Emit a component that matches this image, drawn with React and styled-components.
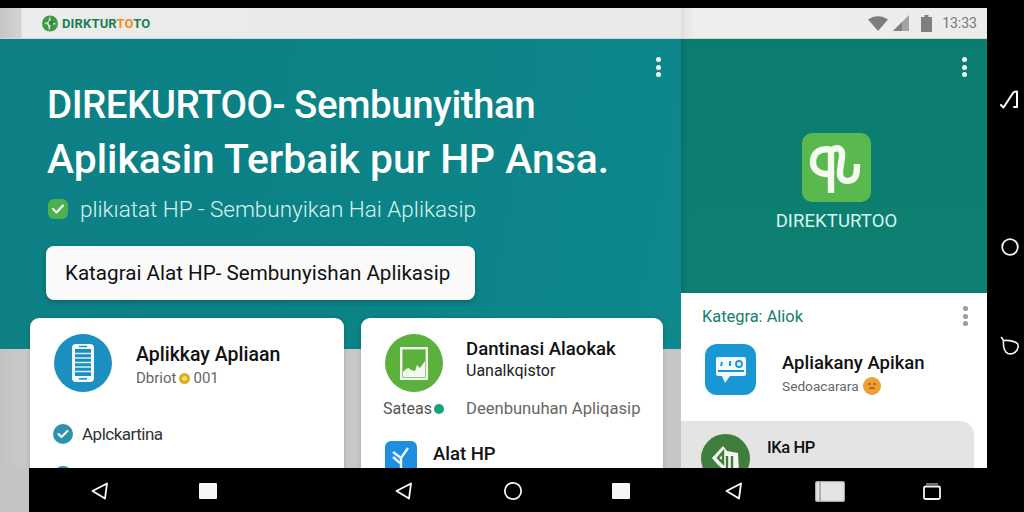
import React from "react";
import styled, { createGlobalStyle } from "styled-components";

const GlobalStyle = createGlobalStyle`
  html, body {
    margin: 0;
    padding: 0;
    background: #000;
  }
  * {
    box-sizing: border-box;
  }
`;

const Page = styled.div`
  width: 1024px;
  height: 512px;
  overflow: hidden;
  background: #000;
  font-family: Roboto, "Noto Sans", sans-serif;
  display: grid;
  grid-template-columns: 29px 958px 37px;
  grid-template-rows: 8px 460px 44px;
`;

const Screen = styled.div`
  grid-column: 1 / 3;
  grid-row: 2;
  display: flex;
  overflow: hidden;
`;

const LeftColumn = styled.div`
  width: 681px;
  display: flex;
  flex-direction: column;
  background: linear-gradient(90deg, #c2c2c4 0, #c8c8ca 20px, #c6c6c6 100%);
`;

const RightColumn = styled.div`
  width: 306px;
  display: flex;
  flex-direction: column;
  background: #fff;
`;

const TopBar = styled.div`
  height: 31px;
  flex: none;
  display: flex;
  align-items: center;
  border-bottom: 1px solid #cfd6d5;
  background: linear-gradient(90deg, #c6c6c8 0, #d4d4d6 21px, #ececec 22px, #e9e9e9 100%);
  padding-left: 42px;
  gap: 4px;
`;

const StatusBar = styled(TopBar)`
  background: linear-gradient(90deg, #dedede 0, #eeeeee 12px, #ececec 100%);
  padding: 0 10px 0 0;
  gap: 0;
  justify-content: flex-end;
`;

const BrandText = styled.span`
  font-size: 13px;
  font-weight: 700;
  color: #1a7f52;
  letter-spacing: 0.15px;
`;

const BrandAccent = styled.span`
  color: #ee8f22;
`;

const Clock = styled.span`
  font-size: 14px;
  color: #777;
  margin-left: 10px;
`;

const StatusIcon = styled.svg`
  flex: none;
  margin-left: ${(p) => p.$gap || 0}px;
`;

const Hero = styled.section`
  height: 310px;
  flex: none;
  background: linear-gradient(100deg, #0d8084 0%, #0b8387 60%, #0e878d 100%);
  padding: 18px 0 0 47px;
  display: flex;
  flex-direction: column;
  color: #fff;
`;

const DotsRow = styled.div`
  display: flex;
  justify-content: flex-end;
  padding-right: 19px;
  height: 20px;
`;

const Dots = styled.div`
  display: flex;
  flex-direction: column;
  justify-content: space-between;
  width: 6px;
  height: 20px;
`;

const Dot = styled.i`
  width: 5px;
  height: 5px;
  border-radius: 50%;
  background: ${(p) => p.$color || "#f2fbfa"};
`;

const Heading = styled.h1`
  margin: 0;
  font-weight: 500;
  white-space: nowrap;
`;

const HeadingLine = styled.span`
  display: block;
  height: 55px;
  line-height: 55px;
  font-size: ${(p) => p.$size}px;
  letter-spacing: ${(p) => p.$tracking || 0}px;
`;

const SubLine = styled.div`
  margin-top: 7px;
  height: 30px;
  display: flex;
  align-items: center;
  gap: 12px;
  padding-left: 1px;
  font-size: 22.5px;
  font-weight: 300;
  color: #d8f3f0;
  white-space: nowrap;
`;

const CheckBox = styled.span`
  width: 20px;
  height: 20px;
  border-radius: 6px;
  background: #4caf50;
  display: flex;
  align-items: center;
  justify-content: center;
`;

const KategoriButton = styled.button`
  margin: 22px 0 0 -1px;
  width: 429px;
  height: 54px;
  border: none;
  border-radius: 8px;
  background: #fafafa;
  box-shadow: 0 2px 5px rgba(0, 40, 40, 0.3);
  padding: 0 0 0 19px;
  text-align: left;
  font-family: inherit;
  font-size: 20.6px;
  color: #111;
  white-space: nowrap;
`;

const CardsRow = styled.div`
  margin-top: -31px;
  flex: 1;
  display: flex;
  gap: 17px;
  padding-left: 30px;
  min-height: 0;
`;

const Card = styled.article`
  width: ${(p) => p.$width}px;
  height: 170px;
  background: #fff;
  border-radius: 9px 9px 0 0;
  box-shadow: 0 1px 4px rgba(0, 0, 0, 0.18);
  padding: 16px 0 0 24px;
  overflow: hidden;
`;

const CardHead = styled.div`
  display: flex;
  align-items: ${(p) => p.$align || "center"};
  gap: ${(p) => p.$gap || 24}px;
`;

const Disc = styled.div`
  width: ${(p) => p.$size || 58}px;
  height: ${(p) => p.$size || 58}px;
  flex: none;
  border-radius: 50%;
  background: ${(p) => p.$color};
  display: flex;
  align-items: center;
  justify-content: center;
`;

const HeadText = styled.div`
  padding-top: ${(p) => p.$top || 0}px;
`;

const CardTitle = styled.div`
  font-size: ${(p) => p.$size || 18.5}px;
  font-weight: 500;
  color: #111;
  white-space: nowrap;
`;

const CardMeta = styled.div`
  margin-top: 3px;
  display: flex;
  align-items: center;
  gap: 3px;
  font-size: 15px;
  color: #666;
  white-space: nowrap;
`;

const Coin = styled.span`
  width: 11px;
  height: 11px;
  border-radius: 50%;
  background: #e0b425;
  border: 3px solid #dcae1e;
  box-shadow: inset 0 0 0 2px #f3df8d;
`;

const CheckRow = styled.div`
  margin: 32px 0 0 -1px;
  display: flex;
  align-items: center;
  gap: 9px;
  font-size: 17px;
  letter-spacing: -0.5px;
  color: #333;
`;

const CheckDisc = styled.span`
  width: 20px;
  height: 20px;
  flex: none;
  border-radius: 50%;
  background: #2b93ae;
  display: flex;
  align-items: center;
  justify-content: center;
`;

const PeekDisc = styled(CheckDisc)`
  margin: 22px 0 0 -1px;
  display: block;
`;

const SmallLine = styled.div`
  font-size: 16px;
  color: #222;
  margin-top: 1px;
  white-space: nowrap;
`;

const TitleStack = styled.div`
  margin-top: 4px;
`;

const MetaRow = styled.div`
  margin: 7px 0 0 -2px;
  display: flex;
  align-items: center;
  font-size: 16px;
  color: #555;
  white-space: nowrap;
`;

const MetaLabel = styled.span`
  width: 51px;
`;

const GreenDot = styled.span`
  width: 10px;
  height: 10px;
  border-radius: 50%;
  background: #14a37f;
`;

const MetaRest = styled.span`
  margin-left: 22px;
  font-size: 16.6px;
  color: #666;
`;

const ToolRow = styled.div`
  margin-top: 23px;
  display: flex;
  align-items: flex-start;
  gap: 16px;
`;

const ToolTile = styled.div`
  width: 32px;
  height: 32px;
  flex: none;
  border-radius: 6px;
  background: #1e8fe0;
  display: flex;
  align-items: center;
  justify-content: center;
`;

const ToolName = styled.div`
  font-size: 18.5px;
  font-weight: 500;
  color: #111;
  margin-top: 2px;
`;

const AppPanel = styled.section`
  height: 254px;
  flex: none;
  background: linear-gradient(180deg, #0b7d70 0%, #0d8072 100%);
  box-shadow: inset 6px 0 6px -5px rgba(0, 60, 70, 0.35);
  padding: 18px 0 0 0;
  display: flex;
  flex-direction: column;
`;

const AppLogoBlock = styled.div`
  margin-top: 56px;
  padding-left: 5px;
  display: flex;
  flex-direction: column;
  align-items: center;
`;

const AppTile = styled.div`
  width: 69px;
  height: 69px;
  border-radius: 10px;
  background: #59b84e;
`;

const AppName = styled.div`
  margin-top: 8px;
  font-size: 18.5px;
  color: #d8f6ee;
  letter-spacing: 0.1px;
`;

const ListPanel = styled.section`
  flex: 1;
  padding: 13px 0 0 0;
  display: flex;
  flex-direction: column;
  overflow: hidden;
`;

const ListHeader = styled.div`
  display: flex;
  align-items: center;
  justify-content: space-between;
  padding: 0 18px 0 21px;
  height: 22px;
  font-size: 16.4px;
  color: #12806b;
`;

const ListItem = styled.div`
  margin: 18px 0 0 24px;
  display: flex;
  align-items: center;
  gap: 26px;
`;

const BlueTile = styled.div`
  width: 51px;
  height: 51px;
  flex: none;
  border-radius: 12px;
  background: #1998d5;
  display: flex;
  align-items: center;
  justify-content: center;
`;

const SmallMeta = styled.div`
  margin-top: 3px;
  display: flex;
  align-items: center;
  gap: 4px;
  font-size: 13.7px;
  color: #666;
  white-space: nowrap;
`;

const Emoji = styled.span`
  width: 18px;
  height: 18px;
  border-radius: 50%;
  background: #eea032;
  display: flex;
  align-items: center;
  justify-content: center;
`;

const GreyRow = styled.div`
  margin: 26px 13px 0 0;
  flex: 1;
  background: #e4e4e4;
  border-radius: 0 14px 0 0;
  padding: 13px 0 0 20px;
  display: flex;
  gap: 17px;
`;

const GreyRowTitle = styled.div`
  margin-top: 4px;
  font-size: 16.5px;
  font-weight: 500;
  letter-spacing: -0.4px;
  color: #111;
`;

const SideRail = styled.aside`
  grid-column: 3;
  grid-row: 2;
  display: flex;
  flex-direction: column;
  align-items: center;
  padding: 81px 0 0 8px;
`;

const RailIcon = styled.svg`
  margin-top: ${(p) => p.$gap || 0}px;
  flex: none;
`;

const LeftGutter = styled.div`
  grid-column: 1;
  grid-row: 3;
  background: #c4c4c6;
`;

const NavBar = styled.nav`
  grid-column: 2 / 4;
  grid-row: 3;
  display: flex;
  align-items: center;
  padding: 2px 0 0 62px;
`;

const NavIcon = styled.svg`
  flex: none;
  margin-left: ${(p) => p.$gap || 0}px;
`;

function ThreeDots({ color }) {
  return (
    <Dots>
      <Dot $color={color} />
      <Dot $color={color} />
      <Dot $color={color} />
    </Dots>
  );
}

function Triangle({ gap }) {
  return (
    <NavIcon $gap={gap} width="18" height="18" viewBox="0 0 18 18" fill="none">
      <path d="M16 1.5 L1.5 9 L14 16.5 Z" stroke="#fff" strokeWidth="1.8" strokeLinejoin="round" />
    </NavIcon>
  );
}

function Square({ gap }) {
  return (
    <NavIcon $gap={gap} width="18" height="16" viewBox="0 0 18 16">
      <rect width="18" height="16" rx="1" fill="#f5f5f5" />
    </NavIcon>
  );
}

export default function App() {
  return (
    <Page>
      <GlobalStyle />
      <Screen>
        <LeftColumn>
          <TopBar>
            <svg width="16" height="17" viewBox="0 0 16 17">
              <circle cx="8" cy="8.5" r="8" fill="#3f9a45" />
              <path d="M2 8 L6 7 L8 1 L9 7 L15 9 L9 10 L7 16 L6 10 Z" fill="#eef5ea" opacity="0.85" />
              <circle cx="9" cy="8" r="2.4" fill="#2f8a3d" />
            </svg>
            <BrandText>
              DIRKTUR<BrandAccent>TO</BrandAccent>TO
            </BrandText>
          </TopBar>
          <Hero>
            <DotsRow>
              <ThreeDots />
            </DotsRow>
            <Heading>
              <HeadingLine $size={38.5} $tracking={-0.5}>DIREKURTOO- Sembunyithan</HeadingLine>
              <HeadingLine $size={40.8}>Aplikasin Terbaik pur HP Ansa.</HeadingLine>
            </Heading>
            <SubLine>
              <CheckBox>
                <svg width="14" height="12" viewBox="0 0 14 12" fill="none">
                  <path d="M2 6 L5.5 9.5 L12 2.5" stroke="#fff" strokeWidth="2" strokeLinecap="round" strokeLinejoin="round" />
                </svg>
              </CheckBox>
              plikıatat HP - Sembunyikan Hai Aplikasip
            </SubLine>
            <KategoriButton>Katagrai Alat HP- Sembunyishan Aplikasip</KategoriButton>
          </Hero>
          <CardsRow>
            <Card $width={314}>
              <CardHead>
                <Disc $color="#1b8fc0">
                  <svg width="22" height="38" viewBox="0 0 22 38">
                    <rect width="22" height="38" rx="4" fill="#f4fbfe" />
                    <rect x="3" y="5" width="16" height="27" fill="#1b8fc0" />
                    <path d="M3 9.5h16M3 14h16M3 18.5h16M3 23h16M3 27.5h16" stroke="#d7f0fa" strokeWidth="1.6" />
                    <rect x="7" y="1.8" width="8" height="1.4" fill="#1b8fc0" />
                    <rect x="7" y="34" width="8" height="1.6" fill="#1b8fc0" />
                  </svg>
                </Disc>
                <HeadText $top={4}>
                  <CardTitle $size={19.5}>Aplikkay Apliaan</CardTitle>
                  <CardMeta>
                    Dbriot <Coin /> 001
                  </CardMeta>
                </HeadText>
              </CardHead>
              <CheckRow>
                <CheckDisc>
                  <svg width="12" height="10" viewBox="0 0 12 10" fill="none">
                    <path d="M1.5 5 L4.5 8 L10.5 2" stroke="#fff" strokeWidth="2" strokeLinecap="round" strokeLinejoin="round" />
                  </svg>
                </CheckDisc>
                Aplckartina
              </CheckRow>
              <PeekDisc />
            </Card>
            <Card $width={302}>
              <CardHead $align="flex-start" $gap={23}>
                <Disc $color="#5cb03c">
                  <svg width="28" height="33" viewBox="0 0 28 33" fill="none">
                    <rect x="1.2" y="1.2" width="25.6" height="30.6" stroke="#f2f8ec" strokeWidth="2.4" />
                    <path d="M3 30 V25 C6 21 9 20 11 23 L15 24 L17 18 L20 21 L25 14 V30 Z" fill="#f2f8ec" />
                  </svg>
                </Disc>
                <TitleStack>
                  <CardTitle $size={18.6}>Dantinasi Alaokak</CardTitle>
                  <SmallLine>Uanalkqistor</SmallLine>
                </TitleStack>
              </CardHead>
              <MetaRow>
                <MetaLabel>Sateas</MetaLabel>
                <GreenDot />
                <MetaRest>Deenbunuhan Apliqasip</MetaRest>
              </MetaRow>
              <ToolRow>
                <ToolTile>
                  <svg width="20" height="26" viewBox="0 0 20 26" fill="none">
                    <path d="M2 8 L10 14 L17 4 M10 14 V26 M2 13 L9 19" stroke="#eaf6ff" strokeWidth="2.4" strokeLinejoin="round" />
                  </svg>
                </ToolTile>
                <ToolName>Alat HP</ToolName>
              </ToolRow>
            </Card>
          </CardsRow>
        </LeftColumn>
        <RightColumn>
          <StatusBar>
            <StatusIcon width="20" height="15" viewBox="0 0 20 15">
              <path d="M0 3.5 C6 -1 14 -1 20 3.5 L10 15 Z" fill="#7d7d7d" />
            </StatusIcon>
            <StatusIcon $gap={5} width="16" height="16" viewBox="0 0 16 16">
              <path d="M16 0 V16 H0 Z" fill="#a4a4a4" />
              <path d="M9 7 V16 H0 Z" fill="#808080" />
            </StatusIcon>
            <StatusIcon $gap={12} width="11" height="17" viewBox="0 0 11 17">
              <path d="M3.5 0 H7.5 V2 H11 V17 H0 V2 H3.5 Z" fill="#7f7f7f" />
            </StatusIcon>
            <Clock>13:33</Clock>
          </StatusBar>
          <AppPanel>
            <DotsRow>
              <ThreeDots />
            </DotsRow>
            <AppLogoBlock>
              <AppTile>
                <svg width="69" height="69" viewBox="0 0 69 69" fill="none">
                  <path
                    d="M29 60 V16 M30 17 C18 14 11 20 11 29 C11 37 17 41 26 41 M30 17 C36 13 41 16 40 24 L38 38 C37 46 42 49 48 47.5 C54 46 55 42 55 31"
                    stroke="#f6fbf2"
                    strokeWidth="6.4"
                  />
                </svg>
              </AppTile>
              <AppName>DIREKTURTOO</AppName>
            </AppLogoBlock>
          </AppPanel>
          <ListPanel>
            <ListHeader>
              Kategra: Aliok
              <ThreeDots color="#9a9a9a" />
            </ListHeader>
            <ListItem>
              <BlueTile>
                <svg width="32" height="30" viewBox="0 0 32 30">
                  <path d="M3 2 H29 Q31 2 31 4 V19 Q31 21 29 21 H15 L10 28 L7 21 H3 Q1 21 1 19 V4 Q1 2 3 2 Z" fill="#f2fafe" />
                  <path d="M3 16 H29" stroke="#1998d5" strokeWidth="2" />
                  <circle cx="24" cy="9" r="3" fill="none" stroke="#1998d5" strokeWidth="1.8" />
                  <path d="M15 6 V11 M7 7 L6 11" stroke="#1998d5" strokeWidth="2" />
                </svg>
              </BlueTile>
              <HeadText $top={7}>
                <CardTitle>Apliakany Apikan</CardTitle>
                <SmallMeta>
                  Sedoacarara
                  <Emoji>
                    <svg width="12" height="12" viewBox="0 0 12 12">
                      <circle cx="3.5" cy="4" r="1.2" fill="#a8541a" />
                      <circle cx="8.5" cy="4" r="1.2" fill="#a8541a" />
                      <path d="M3.5 9 Q6 6.5 8.5 9" stroke="#a8541a" strokeWidth="1.2" fill="none" />
                    </svg>
                  </Emoji>
                </SmallMeta>
              </HeadText>
            </ListItem>
            <GreyRow>
              <Disc $size={49} $color="#3e7f3e">
                <svg width="32" height="32" viewBox="0 0 32 32" fill="none">
                  <path d="M2 15 L13 3 L17 8 L28 10 L29 30 H18 L8 22 Z" fill="#f4f8f0" />
                  <path d="M13 9 L8 15 L13 20 Z M17 13 V27 M22 13 V27" stroke="#3e7f3e" strokeWidth="2.4" />
                </svg>
              </Disc>
              <GreyRowTitle>IKa HP</GreyRowTitle>
            </GreyRow>
          </ListPanel>
        </RightColumn>
      </Screen>
      <SideRail>
        <RailIcon width="20" height="20" viewBox="0 0 20 20" fill="none">
          <path d="M1 16 L3.5 18.5 L13 4 Q14 2.5 16 2.5 H17 V18 H14" stroke="#fff" strokeWidth="2" strokeLinejoin="round" strokeLinecap="round" />
        </RailIcon>
        <RailIcon $gap={128} width="20" height="20" viewBox="0 0 20 20" fill="none">
          <circle cx="10" cy="10" r="7.8" stroke="#f4f4f4" strokeWidth="1.8" />
        </RailIcon>
        <RailIcon $gap={79} width="20" height="20" viewBox="0 0 20 20" fill="none">
          <path d="M1.5 1.5 L3.5 4.5 C8 4 13 5 16 6.5 C19 8 18.5 11 17 14 C15 17.5 11 18.5 8 17.5 C4 16 3 12 3.5 4.5" stroke="#f4f4f4" strokeWidth="1.6" strokeLinecap="round" strokeLinejoin="round" />
        </RailIcon>
      </SideRail>
      <LeftGutter />
      <NavBar>
        <Triangle />
        <Square gap={90} />
        <Triangle gap={178} />
        <NavIcon $gap={90} width="20" height="20" viewBox="0 0 20 20" fill="none">
          <circle cx="10" cy="10" r="8.2" stroke="#f4f4f4" strokeWidth="1.8" />
        </NavIcon>
        <Square gap={89} />
        <Triangle gap={95} />
        <NavIcon $gap={72} width="30" height="21" viewBox="0 0 30 21">
          <rect x="0.6" y="0.6" width="28.8" height="19.8" rx="1.5" fill="#e4e4e4" stroke="#aaa" strokeWidth="1.2" />
          <path d="M5 1 V20" stroke="#8e8e8e" strokeWidth="1.2" />
        </NavIcon>
        <NavIcon $gap={78} width="18" height="17" viewBox="0 0 18 17" fill="none">
          <rect x="1" y="3.5" width="16" height="12.5" rx="1.5" stroke="#f4f4f4" strokeWidth="1.8" />
          <path d="M3 1 H15" stroke="#bbb" strokeWidth="1.2" />
        </NavIcon>
      </NavBar>
    </Page>
  );
}
